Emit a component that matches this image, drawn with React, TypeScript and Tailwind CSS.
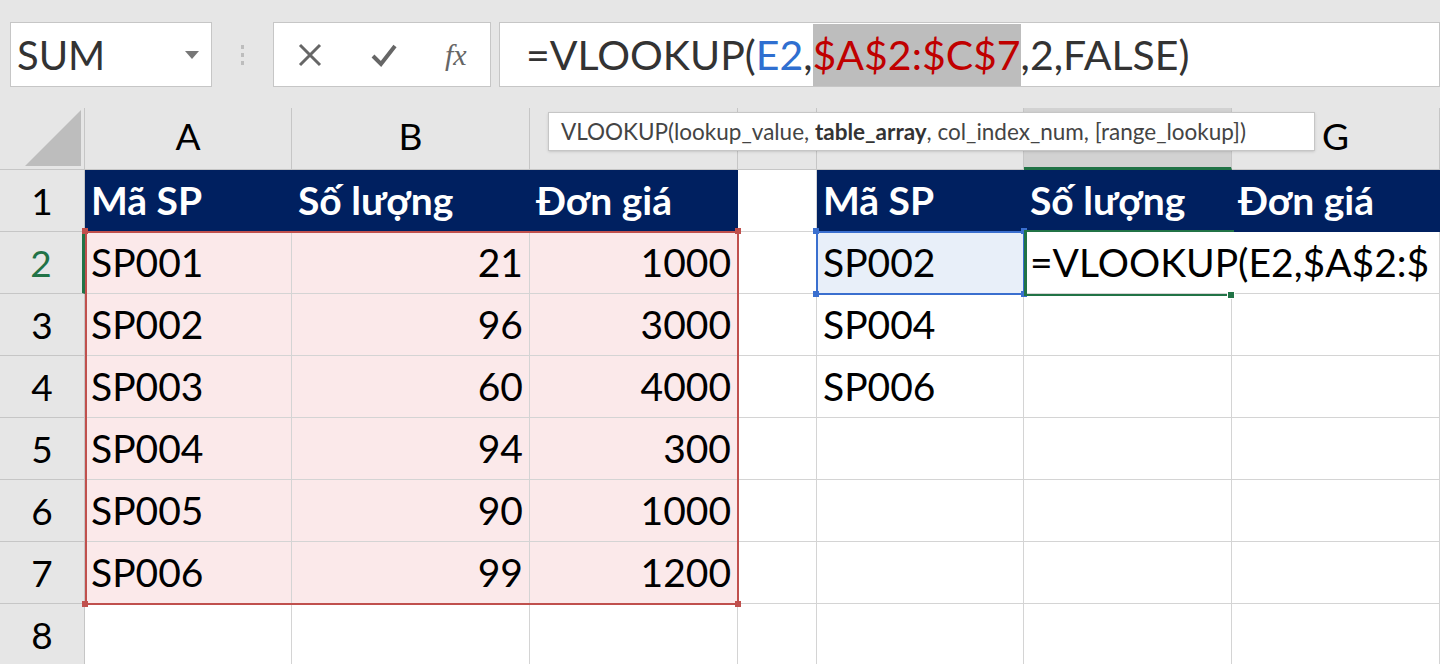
const COLS = [
  { id: "A", w: 207 },
  { id: "B", w: 238 },
  { id: "C", w: 208 },
  { id: "D", w: 79 },
  { id: "E", w: 207 },
  { id: "F", w: 208 },
  { id: "G", w: 208 },
];

const DATA = [
  ["SP001", "21", "1000"],
  ["SP002", "96", "3000"],
  ["SP003", "60", "4000"],
  ["SP004", "94", "300"],
  ["SP005", "90", "1000"],
  ["SP006", "99", "1200"],
];

const LOOKUP = ["SP002", "SP004", "SP006"];

const font = { fontFamily: "Lato, 'Noto Sans', sans-serif" };

function Cell({ w, className = "", children }: { w: number; className?: string; children?: React.ReactNode }) {
  return (
    <div
      className={`h-[62px] shrink-0 border-r border-b border-[#d4d4d4] flex items-center px-[6px] text-[39px] whitespace-nowrap overflow-hidden ${className}`}
      style={{ width: w }}
    >
      {children}
    </div>
  );
}

function RowHead({ n, active }: { n: number; active?: boolean }) {
  return (
    <div
      className={`w-[85px] h-[62px] shrink-0 bg-[#e6e6e6] border-b border-[#c6c6c6] flex items-center justify-center text-[37px] ${
        active ? "bg-[#d2d2d2] text-[#217346] border-r-[3px] border-r-[#217346]" : "border-r border-r-[#c6c6c6] text-black"
      }`}
    >
      {n}
    </div>
  );
}

export default function App() {
  return (
    <div className="w-[1440px] h-[664px] overflow-hidden bg-white relative text-black" style={font}>
      {/* toolbar */}
      <div className="h-[108px] bg-[#e6e6e6] flex items-start pt-[22px] pl-[10px]">
        <div className="w-[202px] h-[65px] bg-white border border-[#c6c6c6] flex items-center justify-between pl-[6px] pr-[12px]">
          <span className="text-[40px] text-[#333]">SUM</span>
          <span className="w-0 h-0 border-l-[7px] border-r-[7px] border-t-[8px] border-l-transparent border-r-transparent border-t-[#777]" />
        </div>
        <div className="w-[61px] h-[65px] flex flex-col items-center justify-center gap-[4px]">
          <span className="w-[3px] h-[4px] bg-[#bdbdbd]" />
          <span className="w-[3px] h-[4px] bg-[#bdbdbd]" />
          <span className="w-[3px] h-[4px] bg-[#bdbdbd]" />
        </div>
        <div className="w-[218px] h-[65px] bg-white border border-[#c6c6c6] flex items-center justify-around text-[#666]">
          <svg width="26" height="26" viewBox="0 0 26 26"><path d="M3 3 L23 23 M23 3 L3 23" stroke="#666" strokeWidth="3" /></svg>
          <svg width="28" height="26" viewBox="0 0 28 26"><path d="M3 14 L11 22 L25 4" stroke="#666" strokeWidth="4" fill="none" /></svg>
          <span className="text-[30px] italic text-[#666]" style={{ fontFamily: "'Liberation Serif', serif" }}>fx</span>
        </div>
        <div className="ml-[8px] flex-1 h-[65px] bg-white border border-[#c6c6c6] flex items-center pl-[26px] text-[41px] text-[#333] whitespace-nowrap">
          <span>=VLOOKUP(</span>
          <span className="text-[#2f6fd0]">E2</span>
          <span>,</span>
          <span className="bg-[#bdbdbd] text-[#c00000] h-[62px] flex items-center">$A$2:$C$7</span>
          <span>,2,FALSE)</span>
        </div>
      </div>

      {/* column headers */}
      <div className="flex h-[62px]">
        <div className="w-[85px] h-[62px] shrink-0 bg-[#e6e6e6] border-r border-b border-[#c6c6c6] flex items-end justify-end p-[3px]">
          <svg width="56" height="56" viewBox="0 0 56 56"><path d="M56 0 L56 56 L0 56 Z" fill="#bdbdbd" /></svg>
        </div>
        {COLS.map((c) => (
          <div
            key={c.id}
            className={`h-[62px] shrink-0 flex items-end justify-center pb-[6px] text-[37px] border-r border-[#c6c6c6] ${
              c.id === "F" ? "bg-[#d2d2d2] border-b-[3px] border-b-[#217346] text-[#217346]" : "bg-[#e6e6e6] border-b border-b-[#c6c6c6]"
            }`}
            style={{ width: c.w }}
          >
            {c.id}
          </div>
        ))}
      </div>

      {/* row 1 */}
      <div className="flex">
        <RowHead n={1} />
        {["Mã SP", "Số lượng", "Đơn giá"].map((t, i) => (
          <Cell key={i} w={COLS[i].w} className="bg-[#002060] text-white font-bold border-r-[#002060] border-b-[#002060]">{t}</Cell>
        ))}
        <Cell w={COLS[3].w} />
        {["Mã SP", "Số lượng", "Đơn giá"].map((t, i) => (
          <Cell key={i} w={COLS[4 + i].w} className="bg-[#002060] text-white font-bold border-r-[#002060] border-b-[#002060]">{t}</Cell>
        ))}
      </div>

      {/* rows 2-8 */}
      {Array.from({ length: 7 }).map((_, r) => {
        const d = DATA[r];
        return (
          <div key={r} className="flex">
            <RowHead n={r + 2} active={r === 0} />
            <Cell w={COLS[0].w} className={d ? "bg-[#fbe9ea]" : ""}>{d?.[0]}</Cell>
            <Cell w={COLS[1].w} className={d ? "bg-[#fbe9ea] justify-end" : ""}>{d?.[1]}</Cell>
            <Cell w={COLS[2].w} className={d ? "bg-[#fbe9ea] justify-end" : ""}>{d?.[2]}</Cell>
            <Cell w={COLS[3].w} />
            <Cell w={COLS[4].w} className={r === 0 ? "bg-[#e8eff9]" : ""}>{LOOKUP[r]}</Cell>
            {r === 0 ? (
              <Cell w={COLS[5].w + COLS[6].w} className="overflow-hidden">=VLOOKUP(E2,$A$2:$</Cell>
            ) : (
              <>
                <Cell w={COLS[5].w} />
                <Cell w={COLS[6].w} />
              </>
            )}
          </div>
        );
      })}

      {/* range outline A2:C7 */}
      <div className="absolute left-[85px] top-[231px] w-[654px] h-[374px] border-[2px] border-[#c0504d] pointer-events-none" />
      <span className="absolute left-[82px] top-[228px] w-[6px] h-[6px] bg-[#c0504d]" />
      <span className="absolute left-[735px] top-[228px] w-[6px] h-[6px] bg-[#c0504d]" />
      <span className="absolute left-[82px] top-[601px] w-[6px] h-[6px] bg-[#c0504d]" />
      <span className="absolute left-[735px] top-[601px] w-[6px] h-[6px] bg-[#c0504d]" />

      {/* E2 outline */}
      <div className="absolute left-[816px] top-[231px] w-[209px] h-[64px] border-[2px] border-[#3a6fcf] pointer-events-none" />
      <span className="absolute left-[813px] top-[228px] w-[6px] h-[6px] bg-[#3a6fcf]" />
      <span className="absolute left-[1021px] top-[228px] w-[6px] h-[6px] bg-[#3a6fcf]" />
      <span className="absolute left-[813px] top-[291px] w-[6px] h-[6px] bg-[#3a6fcf]" />
      <span className="absolute left-[1021px] top-[291px] w-[6px] h-[6px] bg-[#3a6fcf]" />

      {/* F2 active cell (border only on left, top, bottom since text overflows) */}
      <div className="absolute left-[1024px] top-[230px] w-[210px] h-[66px] border-y-[2px] border-l-[3px] border-[#217346] pointer-events-none" />
      <span className="absolute left-[1227px] top-[291px] w-[8px] h-[8px] bg-[#217346] border border-white" />

      {/* tooltip */}
      <div className="absolute left-[548px] top-[112px] w-[767px] h-[39px] bg-white border border-[#c6c6c6] flex items-center pl-[12px] text-[22.5px] text-[#444] whitespace-nowrap shadow-sm">
        VLOOKUP(lookup_value,&nbsp;<b className="text-[#333]">table_array</b>, col_index_num, [range_lookup])
      </div>
    </div>
  );
}
